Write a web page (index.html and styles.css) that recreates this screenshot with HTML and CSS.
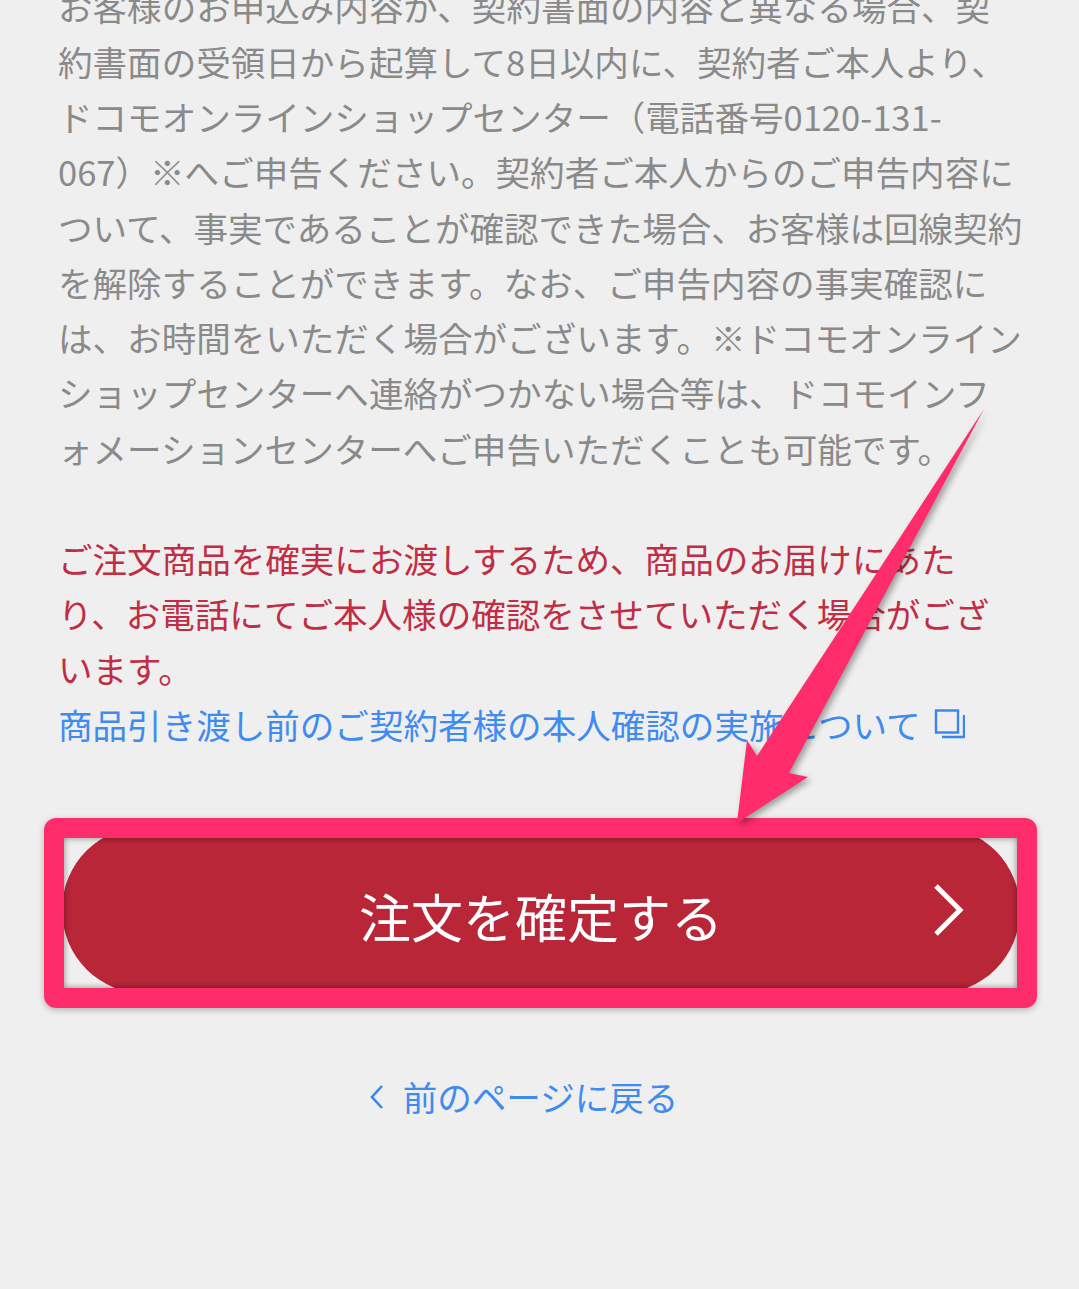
FILE: index.html
```html
<!DOCTYPE html>
<html lang="ja">
<head>
    <meta charset="UTF-8">
    <meta name="viewport" content="width=device-width, initial-scale=1.0">
    <title>注文を確定する</title>
    <link rel="stylesheet" href="styles.css">
</head>
<body>

    <div class="container">
        <p class="notice">
            お客様のお申込み内容が、契約書面の内容と異なる場合、契<br>
            約書面の受領日から起算して8日以内に、契約者ご本人より、<br>
            ドコモオンラインショップセンター（電話番号0120-131-<br>
            067）※へご申告ください。契約者ご本人からのご申告内容に<br>
            ついて、事実であることが確認できた場合、お客様は回線契約<br>
            を解除することができます。なお、ご申告内容の事実確認に<br>
            は、お時間をいただく場合がございます。※ドコモオンライン<br>
            ショップセンターへ連絡がつかない場合等は、ドコモインフ<br>
            ォメーションセンターへご申告いただくことも可能です。
        </p>

        <p class="warning">
            ご注文商品を確実にお渡しするため、商品のお届けにあた<br>
            り、お電話にてご本人様の確認をさせていただく場合がござ<br>
            います。
        </p>
        <a class="link" href="#">商品引き渡し前のご契約者様の本人確認の実施について
            <svg class="external" width="32" height="30" viewBox="0 0 32 30" fill="none" stroke="#3a86ee" stroke-width="2.4">
                <rect x="3" y="1.5" width="22" height="22"/>
                <path d="M31 6V28H9"/>
            </svg>
        </a>

        <div class="confirm-wrap">
            <button class="confirm">
                注文を確定する
                <svg class="chevron" width="32" height="54" viewBox="0 0 32 54" fill="none" stroke="#fff" stroke-width="5">
                    <path d="M3 3L27 27L3 51"/>
                </svg>
            </button>
            <div class="frame"></div>
        </div>

        <a class="back" href="#">
            <svg width="16" height="26" viewBox="0 0 16 26" fill="none" stroke="#3a86ee" stroke-width="2.6">
                <path d="M13 2L3 13L13 24"/>
            </svg>
            前のページに戻る
        </a>
    </div>

    <!-- annotation arrow -->
    <svg class="arrow" width="1079" height="1289" viewBox="0 0 1079 1289">
        <polygon points="984,409 757,756 747,740 737,823 808,777 789,773" fill="#ff2c6b"/>
    </svg>

</body>
</html>
```

FILE: styles.css
```css
* {
    margin: 0;
    padding: 0;
    box-sizing: border-box;
}
html, body {
    height: 1289px;
    overflow: hidden;
}
body {
    background: #efefef;
    font-family: "Noto Sans CJK JP", sans-serif;
    position: relative;
}
.container {
    margin-top: -21.5px;
    padding: 0 44px 0 58px;
    font-size: 34.55px;
    line-height: 55.25px;
    white-space: nowrap;
}
.notice {
    color: #8a8a8a;
    margin-bottom: 55px;
}
.warning {
    color: #c02d44;
}
.link {
    color: #3f8bf0;
    text-decoration: none;
    display: block;
}
.external {
    vertical-align: 0;
    margin-left: 5px;
}
.confirm-wrap {
    position: relative;
    width: 958px;
    height: 168px;
    margin: 74.25px 0 0 4px;
}
.confirm {
    width: 100%;
    height: 100%;
    border: none;
    border-radius: 84px;
    background: #b82638;
    color: #fff;
    font-family: inherit;
    font-size: 52px;
    padding-top: 10px;
    position: relative;
}
.chevron {
    position: absolute;
    right: 55px;
    top: 57px;
}
.frame {
    position: absolute;
    top: -8px;
    left: -18px;
    width: 993px;
    height: 190px;
    border: 20px solid #ff2c6b;
    border-radius: 12px;
    box-shadow: 0 2px 6px rgba(0, 0, 0, 0.25), inset 0 0 6px rgba(0, 0, 0, 0.45);
}
.back {
    display: flex;
    align-items: center;
    justify-content: center;
    gap: 18px;
    margin: 75px 0 0 -46px;
    color: #3f8bf0;
    text-decoration: none;
}
.arrow {
    position: absolute;
    top: 0;
    left: 0;
    filter: drop-shadow(3px 3px 3px rgba(0, 0, 0, 0.35));
}
```
